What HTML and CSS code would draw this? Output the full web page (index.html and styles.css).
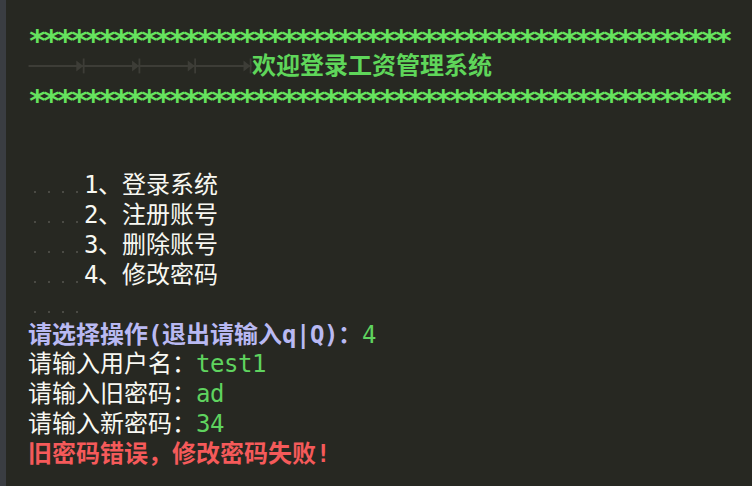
FILE: index.html
```html
<!DOCTYPE html>
<html lang="zh-CN">
<head>
<meta charset="utf-8">
<title>工资管理系统</title>
<link rel="stylesheet" href="styles.css">
</head>
<body>
<div class="term">
  <div class="gutter"></div>
  <div class="screen">
    <div class="line stars">**************************************************</div>
    <div class="line head"><svg class="tabs" width="224" height="30" viewBox="0 0 224 30"><g fill="#3d3d37" stroke="#3d3d37"><line x1="0" y1="14" x2="224" y2="14" stroke-width="2"/><path d="M48 8.5 L55 14 L48 19.5 Z" stroke="none"/><rect x="54.5" y="6.5" width="1.8" height="15" stroke="none"/><path d="M104 8.5 L111 14 L104 19.5 Z" stroke="none"/><rect x="110.5" y="6.5" width="1.8" height="15" stroke="none"/><path d="M160 8.5 L167 14 L160 19.5 Z" stroke="none"/><rect x="166.5" y="6.5" width="1.8" height="15" stroke="none"/><path d="M216 8.5 L223 14 L216 19.5 Z" stroke="none"/><rect x="222.2" y="6.5" width="1.8" height="15" stroke="none"/></g></svg>欢迎登录工资管理系统</div>
    <div class="line stars">**************************************************</div>
    <div class="line"></div>
    <div class="line"></div>
    <div class="line menu"><span class="sp"></span><span class="sp"></span><span class="sp"></span><span class="sp"></span><span class="a">1</span>、登录系统</div>
    <div class="line menu"><span class="sp"></span><span class="sp"></span><span class="sp"></span><span class="sp"></span><span class="a">2</span>、注册账号</div>
    <div class="line menu"><span class="sp"></span><span class="sp"></span><span class="sp"></span><span class="sp"></span><span class="a">3</span>、删除账号</div>
    <div class="line menu"><span class="sp"></span><span class="sp"></span><span class="sp"></span><span class="sp"></span><span class="a">4</span>、修改密码</div>
    <div class="line menu"><span class="sp"></span><span class="sp"></span><span class="sp"></span><span class="sp"></span></div>
    <div class="line prompt">请选择操作<span class="a">(</span>退出请输入<span class="a">q|Q)</span>：<span class="a val">4</span></div>
    <div class="line plain">请输入用户名：<span class="a val">test1</span></div>
    <div class="line plain">请输入旧密码：<span class="a val">ad</span></div>
    <div class="line plain">请输入新密码：<span class="a val">34</span></div>
    <div class="line err">旧密码错误，修改密码失败<span class="a">!</span></div>
  </div>
</div>
</body>
</html>
```
FILE: styles.css
```css
html, body {
  margin: 0;
  padding: 0;
  background: #272822;
}
.term {
  display: flex;
  width: 752px;
  height: 486px;
  overflow: hidden;
  background: #272822;
}
.gutter {
  width: 6px;
  flex: none;
  background: #3a3d42;
}
.screen {
  flex: 1;
  padding: 22px 0 0 22px;
  font-family: "DejaVu Sans Mono", "Noto Sans CJK SC", monospace;
  font-size: 24px;
  color: #f8f8f2;
}
.line {
  height: 29.86px;
  line-height: 29.86px;
  white-space: pre;
}
.a {
  letter-spacing: -0.45px;
}
.stars {
  box-sizing: border-box;
  padding-top: 6px;
  line-height: 24px;
  color: #66e35e;
  font-weight: bold;
  font-size: 31px;
  letter-spacing: -4.66px;
}
.head {
  color: #5fd65a;
  font-weight: bold;
}
.tabs {
  display: inline-block;
  vertical-align: top;
  height: 29.86px;
}
.sp {
  display: inline-block;
  width: 2px;
  height: 2px;
  margin: 0 6px;
  background: #4a4a44;
}
.prompt {
  color: #b9b9f2;
  font-weight: bold;
}
.val {
  color: #5fd35f;
  font-weight: normal;
}
.err {
  color: #f55a5a;
  font-weight: bold;
}
```
